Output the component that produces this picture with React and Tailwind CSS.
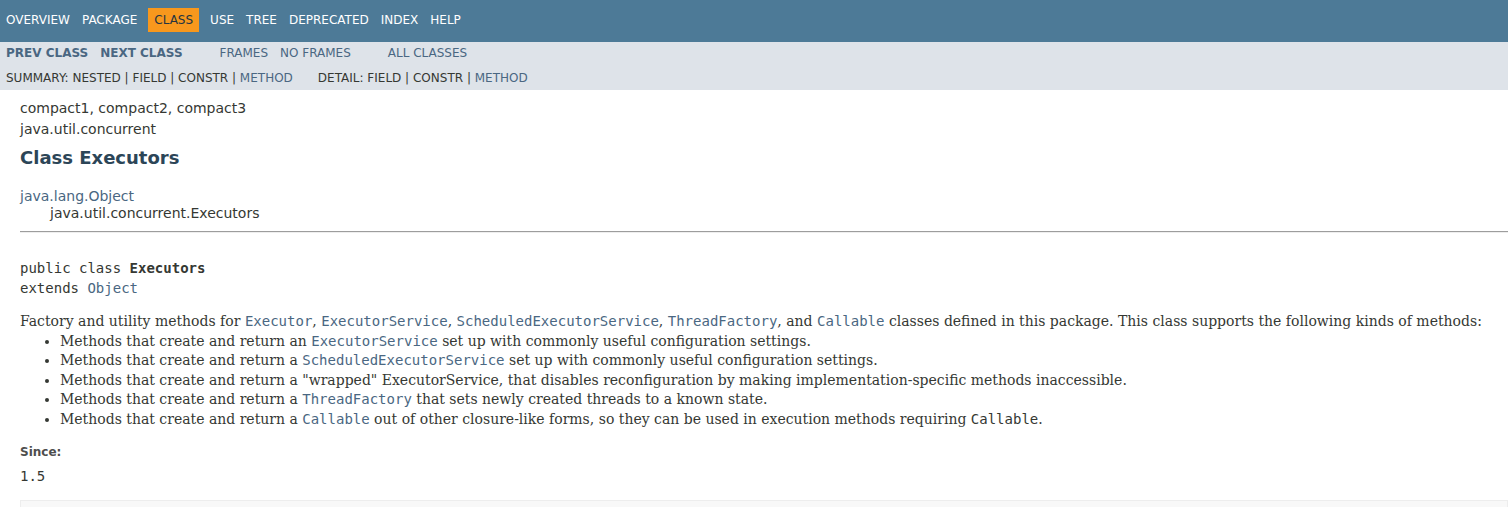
import React from "react";

const topItems = ["Overview", "Package", "Class", "Use", "Tree", "Deprecated", "Index", "Help"];

function Code({ children, link }) {
  return (
    <code className={`font-['DejaVu_Sans_Mono',monospace] text-[14px] ${link ? "text-[#4A6782]" : ""}`}>
      {children}
    </code>
  );
}

export default function App() {
  return (
    <div className="min-h-[507px] bg-white text-[#353833] font-['DejaVu_Sans',Arial,sans-serif] text-[14px]">
      {/* top nav */}
      <div className="h-[42px] bg-[#4D7A97] pt-[8px] text-[12px] leading-[14px] text-white">
        <ul className="flex">
          {topItems.map((item) =>
            item === "Class" ? (
              <li key={item} className="mx-[5px] bg-[#F8981D] px-[6px] py-[5px] uppercase text-[#253441]">
                {item}
              </li>
            ) : (
              <li key={item} className="px-[6px] py-[5px] uppercase">
                {item}
              </li>
            )
          )}
        </ul>
      </div>

      {/* sub nav */}
      <div className="h-[48px] bg-[#dee3e9] text-[12px] leading-[14px] uppercase">
        <div className="flex pt-[4px] text-[#4A6782]">
          <ul className="mr-[25px] flex font-bold">
            <li className="px-[6px]">Prev Class</li>
            <li className="px-[6px]">Next Class</li>
          </ul>
          <ul className="mr-[25px] flex">
            <li className="px-[6px]">Frames</li>
            <li className="px-[6px]">No Frames</li>
          </ul>
          <ul className="flex">
            <li className="px-[6px]">All Classes</li>
          </ul>
        </div>
        <div className="mt-[11px] flex pl-[6px]">
          <div className="mr-[25px]">
            Summary:&nbsp;Nested&nbsp;|&nbsp;Field&nbsp;|&nbsp;Constr&nbsp;|&nbsp;<span className="text-[#4A6782]">Method</span>
          </div>
          <div>
            Detail:&nbsp;Field&nbsp;|&nbsp;Constr&nbsp;|&nbsp;<span className="text-[#4A6782]">Method</span>
          </div>
        </div>
      </div>

      {/* header */}
      <div className="pl-[20px] pt-[10px]">
        <div className="leading-[16px]">compact1, compact2, compact3</div>
        <div className="mt-[5px] leading-[16px]">java.util.concurrent</div>
        <h2 className="mt-[10px] text-[18px] font-bold leading-[21px] text-[#2c4557]">Class Executors</h2>
      </div>

      {/* content */}
      <div className="pl-[20px]">
        <ul className="mt-[20px] leading-[16px]">
          <li className="text-[#4A6782]">java.lang.Object</li>
          <li className="pl-[30px] pt-[1px]">java.util.concurrent.Executors</li>
        </ul>
        <div className="mt-[10px] border-t border-b border-t-[#9d9d9d] border-b-[#eeeeee]" />

        <pre className="mt-[25px] font-['DejaVu_Sans_Mono',monospace] text-[14px] leading-[20px]">
          public class <span className="font-bold">Executors</span>
          {"\n"}extends <span className="text-[#4A6782]">Object</span>
        </pre>

        <div className="mt-[14px] font-['DejaVu_Serif',Georgia,serif] text-[14px] leading-[19.6px]">
          Factory and utility methods for <Code link>Executor</Code>, <Code link>ExecutorService</Code>,{" "}
          <Code link>ScheduledExecutorService</Code>, <Code link>ThreadFactory</Code>, and <Code link>Callable</Code>{" "}
          classes defined in this package. This class supports the following kinds of methods:
          <ul className="list-disc pl-[40px]">
            <li>
              Methods that create and return an <Code link>ExecutorService</Code> set up with commonly useful
              configuration settings.
            </li>
            <li>
              Methods that create and return a <Code link>ScheduledExecutorService</Code> set up with commonly useful
              configuration settings.
            </li>
            <li>
              Methods that create and return a "wrapped" ExecutorService, that disables reconfiguration by making
              implementation-specific methods inaccessible.
            </li>
            <li>
              Methods that create and return a <Code link>ThreadFactory</Code> that sets newly created threads to a
              known state.
            </li>
            <li>
              Methods that create and return a <Code link>Callable</Code> out of other closure-like forms, so they can
              be used in execution methods requiring <Code>Callable</Code>.
            </li>
          </ul>
        </div>

        <dl>
          <dt className="mt-[15px] text-[12px] font-bold leading-[14px] text-[#4E4E4E]">Since:</dt>
          <dd className="mt-[9px] font-['DejaVu_Sans_Mono',monospace] text-[14px] leading-[16px]">1.5</dd>
        </dl>

        <div className="mt-[16px] h-[20px] border border-[#ededed] bg-[#f8f8f8]" />
      </div>
    </div>
  );
}
